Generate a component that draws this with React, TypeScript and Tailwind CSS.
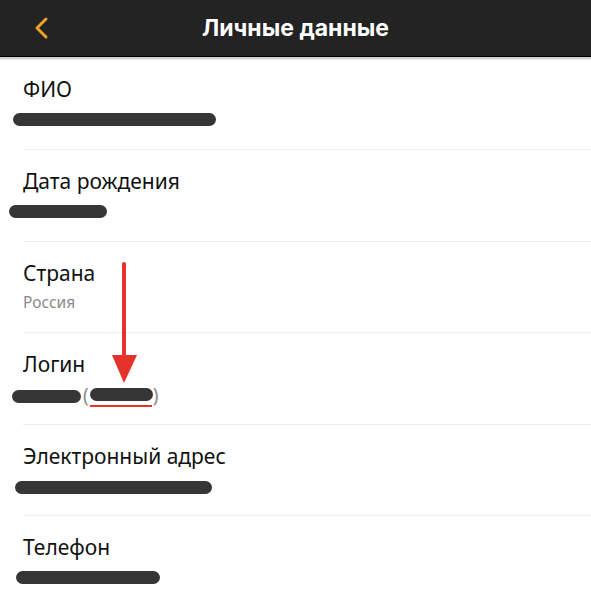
import React from 'react'

const Pill = ({ w, className = '' }: { w: number; className?: string }) => (
  <span
    className={`inline-block h-[13px] rounded-full bg-[#363636] ${className}`}
    style={{ width: w }}
  />
)

const Row = ({
  label,
  first,
  children,
}: {
  label: string
  first?: boolean
  children: React.ReactNode
}) => (
  <div
    className={`ml-[23px] flex flex-col ${first ? 'h-[89px] pt-[15px]' : 'h-[91.5px] pt-[17px] border-t border-[#eeeeee]'}`}
  >
    <div className="h-[28px] leading-[28px] text-[21px] text-[#111]">{label}</div>
    <div className="mt-[6px] h-[20px] flex items-center text-[15.5px] text-[#8a8a8a]">
      {children}
    </div>
  </div>
)

export default function App() {
  return (
    <div
      className="relative w-[591px] h-[605px] overflow-hidden bg-white"
      style={{ fontFamily: '"Noto Sans", "Open Sans", sans-serif' }}
    >
      <div className="h-[57px] bg-[#232323] border-b border-black flex items-center relative">
        <svg className="absolute left-[32px] top-[16px]" width="18" height="24" viewBox="0 0 18 24">
          <path d="M14 3 L5 12 L14 21" fill="none" stroke="#f0a12e" strokeWidth="3" strokeLinecap="round" strokeLinejoin="round" />
        </svg>
        <div
          className="w-full text-center text-white text-[23px] font-bold"
          style={{ fontFamily: 'Inter, "Noto Sans", sans-serif' }}
        >
          Личные данные
        </div>
      </div>
      <div className="h-[3px] bg-[#cfcfcf] border-b border-[#ececec]" />

      <Row label="ФИО" first>
        <Pill w={203} className="-ml-[10px]" />
      </Row>
      <Row label="Дата рождения">
        <Pill w={98} className="-ml-[14px]" />
      </Row>
      <Row label="Страна">
        <span>Россия</span>
      </Row>
      <Row label="Логин">
        <Pill w={69} className="-ml-[11px] mt-[4px]" />
        <span className="ml-[2px] mt-[2px] text-[19px] leading-none">(</span>
        <span className="relative ml-[1px] flex">
          <Pill w={63} />
          <span className="absolute left-0 top-[17px] h-[2px] w-[62px] bg-[#e5322b]" />
        </span>
        <span className="mt-[2px] text-[19px] leading-none">)</span>
      </Row>
      <Row label="Электронный адрес">
        <Pill w={197} className="-ml-[8px] mt-[4px]" />
      </Row>
      <Row label="Телефон">
        <Pill w={144} className="-ml-[7px]" />
      </Row>

      <svg className="absolute left-[110px] top-[262px]" width="30" height="124" viewBox="0 0 30 124">
        <line x1="14" y1="2" x2="14" y2="100" stroke="#e5322b" strokeWidth="4" strokeLinecap="round" />
        <path d="M2 93 L27 93 L14 121 Z" fill="#e5322b" />
      </svg>
    </div>
  )
}
